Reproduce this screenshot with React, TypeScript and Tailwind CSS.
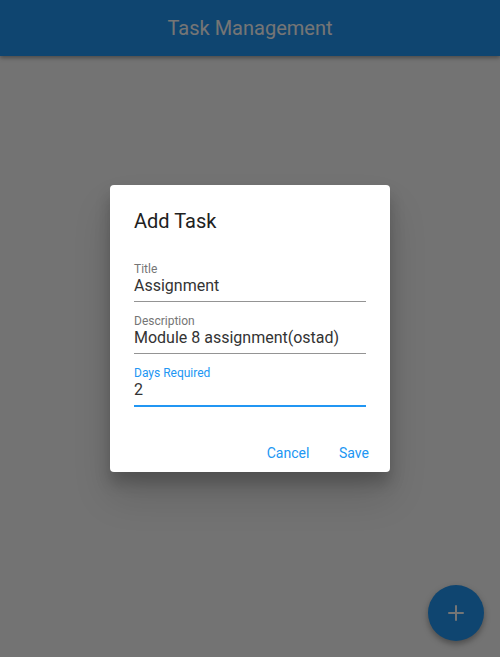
import React from "react";
import { Plus } from "lucide-react";

interface FieldProps {
  label: string;
  value: string;
  focused?: boolean;
}

const Field: React.FC<FieldProps> = ({ label, value, focused }) => {
  return (
    <div
      className={`pt-[1px] pb-[6px] ${
        focused ? "border-b-2 border-[#2196f3]" : "border-b border-[#949494]"
      }`}
    >
      <p
        className={`text-[12px] leading-4 ${
          focused ? "text-[#2196f3]" : "text-[#757575]"
        }`}
      >
        {label}
      </p>
      <p className="text-[16px] leading-[18px] text-[#333333]">{value}</p>
    </div>
  );
};

const App: React.FC = () => {
  return (
    <div
      className="relative w-[500px] h-[657px] overflow-hidden bg-[#fafafa]"
      style={{ fontFamily: "Roboto, 'Noto Sans', sans-serif" }}
    >
      {/* App bar */}
      <header className="h-14 bg-[#2196f3] shadow-[0_2px_4px_rgba(0,0,0,0.35)] flex items-center justify-center">
        <h1 className="text-[20px] font-normal text-white">Task Management</h1>
      </header>

      {/* Floating action button */}
      <button className="absolute right-4 bottom-4 w-14 h-14 rounded-full bg-[#2196f3] shadow-[0_3px_6px_rgba(0,0,0,0.35)] flex items-center justify-center">
        <Plus className="w-6 h-6 text-white" strokeWidth={2} />
      </button>

      {/* Modal barrier */}
      <div className="absolute inset-0 bg-black/[0.54] flex items-center justify-center">
        <div className="w-[280px] rounded bg-white shadow-[0_11px_15px_rgba(0,0,0,0.2),0_24px_38px_rgba(0,0,0,0.14)]">
          <div className="px-6 pt-6">
            <h2 className="text-[20px] leading-6 text-[#212121]">Add Task</h2>
            <div className="mt-[27px] flex flex-col gap-[10px]">
              <Field label="Title" value="Assignment" />
              <Field label="Description" value="Module 8 assignment(ostad)" />
              <Field label="Days Required" value="2" focused />
            </div>
          </div>
          <div className="flex justify-end gap-[2px] pr-1 pt-7 pb-[1px]">
            <button className="h-9 min-w-16 px-2 text-[14px] font-normal text-[#2196f3]">
              Cancel
            </button>
            <button className="h-9 min-w-16 px-2 text-[14px] font-normal text-[#2196f3]">
              Save
            </button>
          </div>
        </div>
      </div>
    </div>
  );
};

export default App;
